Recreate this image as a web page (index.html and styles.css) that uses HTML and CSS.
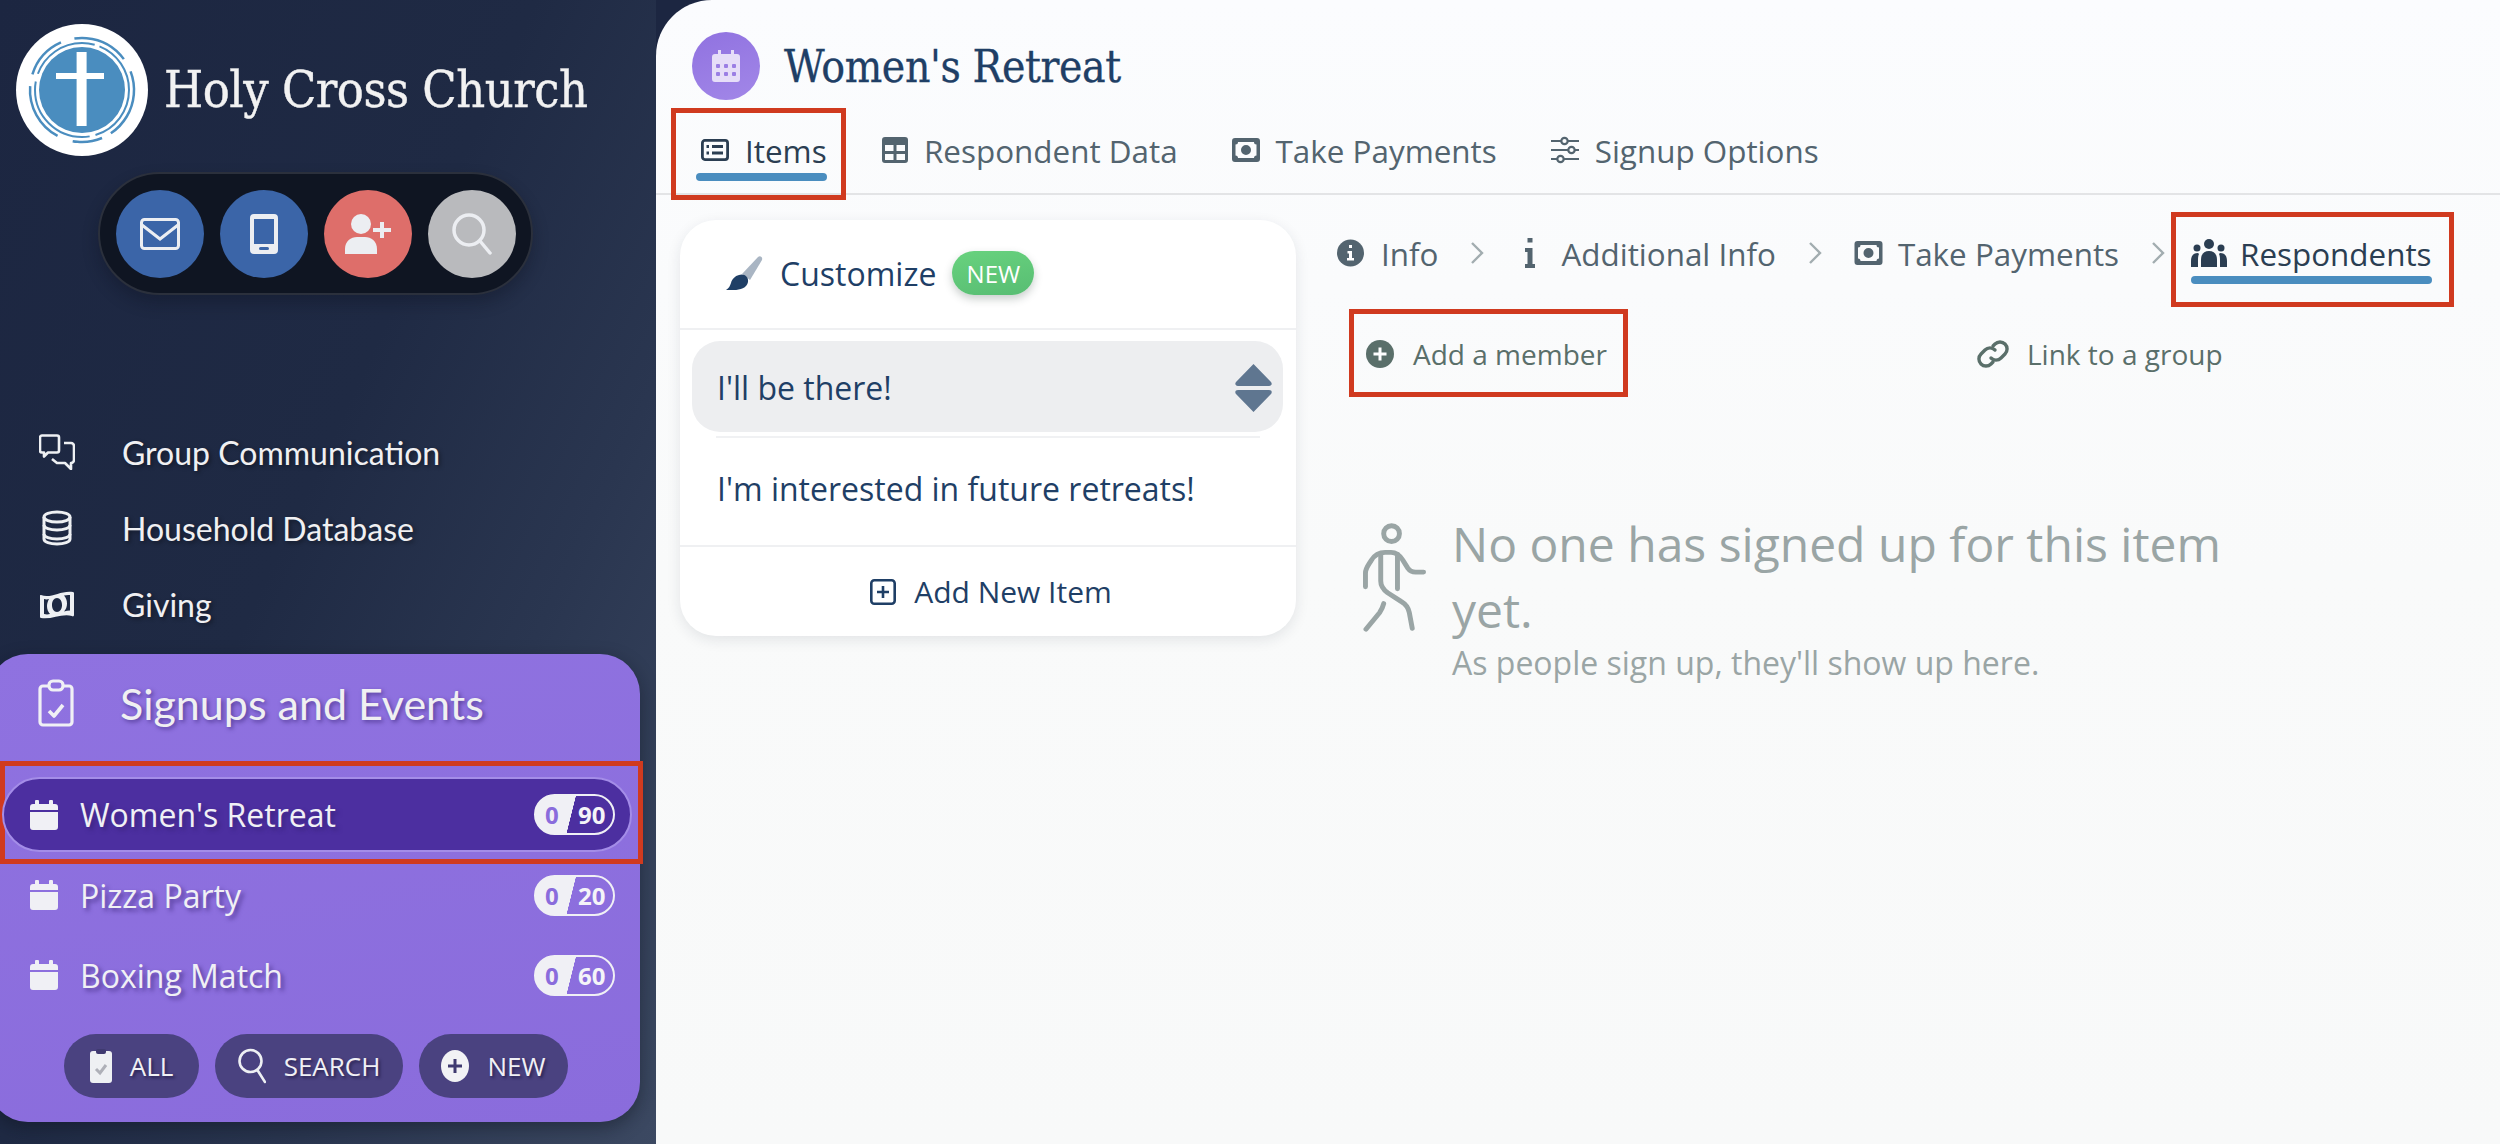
FILE: index.html
```html
<!DOCTYPE html>
<html lang="en">
<head>
    <meta charset="UTF-8">
    <title>Holy Cross Church - Women's Retreat</title>
    <link rel="stylesheet" href="styles.css">
</head>
<body>
<aside class="sidebar">
    <div class="brand">
        <svg class="logo" viewBox="0 0 132 132">
            <circle cx="66" cy="66" r="66" fill="#fff"/>
            <circle cx="66" cy="66" r="43" fill="#4a8dbf"/>
            <circle cx="66" cy="66" r="47" fill="none" stroke="#4a8dbf" stroke-width="2" stroke-dasharray="60 6 90 8 70 5"/>
            <circle cx="66" cy="66" r="52" fill="none" stroke="#4a8dbf" stroke-width="2.5" stroke-dasharray="44 14 70 10 30 16 60 12" transform="rotate(-85 66 66)"/>
            <rect x="60.6" y="28" width="10" height="74" fill="#fff"/>
            <rect x="40" y="49" width="48" height="6" fill="#fff"/>
        </svg>
        <h1 class="brand-name">Holy Cross Church</h1>
    </div>

    <div class="quick">
        <span class="quick-btn blue">
            <svg viewBox="0 0 40 32" width="40" height="32" fill="none" stroke="#eceef2" stroke-width="3"><rect x="1.5" y="1.5" width="37" height="29" rx="3"/><path d="M2 7l18 14L38 7"/></svg>
        </span>
        <span class="quick-btn blue">
            <svg viewBox="0 0 28 40" width="28" height="40"><path fill="#eceef2" fill-rule="evenodd" d="M4 0h20a4 4 0 0 1 4 4v32a4 4 0 0 1-4 4H4a4 4 0 0 1-4-4V4a4 4 0 0 1 4-4zm0 5v25h20V5z"/><rect x="9" y="33" width="10" height="3" rx="1.5" fill="#3b65a8"/></svg>
        </span>
        <span class="quick-btn red">
            <svg viewBox="0 0 46 40" width="46" height="40" fill="#eceef2"><circle cx="16" cy="10" r="10"/><path d="M0 40v-5c0-8 6-12 12-12h8c6 0 12 4 12 12v5z"/><path d="M35 8h4v6h7v4h-7v6h-4v-6h-7v-4h7z"/></svg>
        </span>
        <span class="quick-btn grey">
            <svg viewBox="0 0 40 42" width="40" height="42" fill="none" stroke="#eceef2" stroke-width="3.5" stroke-linecap="round"><circle cx="17" cy="17" r="15"/><path d="M28 28l10 12"/></svg>
        </span>
    </div>

    <nav class="nav">
        <a class="nav-row">
            <svg class="nav-icon" viewBox="0 0 36 36" fill="none" stroke="#eef0f3" stroke-width="2.6" stroke-linejoin="round"><path d="M3 1.5h15a2 2 0 0 1 2 2v13a2 2 0 0 1-2 2H9l-4 4v-4H3a2 2 0 0 1-2-2v-13a2 2 0 0 1 2-2z"/><path d="M25 9h7a3 3 0 0 1 3 3v14a3 3 0 0 1-3 3v6l-6-6h-8l-5-4"/></svg>
            <span>Group Communication</span>
        </a>
        <a class="nav-row">
            <svg class="nav-icon" viewBox="0 0 36 36" fill="none" stroke="#eef0f3" stroke-width="3"><ellipse cx="18" cy="7" rx="13" ry="5"/><path d="M5 7v22c0 3 6 5 13 5s13-2 13-5V7"/><path d="M5 15c0 3 6 5 13 5s13-2 13-5M5 24c0 3 6 5 13 5s13-2 13-5"/></svg>
            <span>Household Database</span>
        </a>
        <a class="nav-row">
            <svg class="nav-icon" viewBox="0 0 36 36"><path fill="#eef0f3" fill-rule="evenodd" d="M2 9c10 4 20-5 32-3 1 0 1 1 1 2v21c0 1-1 2-2 1-10-3-21 4-31 2-1 0-1-1-1-2V10c0-1 0-1 1-1zm3 4v15c2 .5 4 .5 6 0-2-2-3-5-3-8 0-3 1-5 2-7-2 .5-3 .5-5 0zm26-4c-2-.2-4 0-6 .4 2 2 3 5 3 8s-1 6-3 8c2-.5 4-.8 6-.8zM18 12c-3 0-5 3-5 7s2 7 5 7 5-3 5-7-2-7-5-7z"/></svg>
            <span>Giving</span>
        </a>
    </nav>

    <section class="signups">
        <div class="signups-head">
            <svg class="signups-icon" viewBox="0 0 36 48" fill="none" stroke="#f0f0f5" stroke-width="3.2" stroke-linejoin="round"><path d="M11 7H5a3 3 0 0 0-3 3v33a3 3 0 0 0 3 3h26a3 3 0 0 0 3-3V10a3 3 0 0 0-3-3h-6"/><rect x="11" y="2" width="14" height="9" rx="4"/><path d="M11 32l5 5 9-11" stroke-width="3.6"/></svg>
            <span>Signups and Events</span>
        </div>

        <div class="current-mark">
            <a class="event selected">
                <svg class="cal" viewBox="0 0 28 30"><use href="#cal-shape"/></svg>
                <span class="event-name">Women's Retreat</span>
                <span class="count"><b class="count-in">0</b><b class="count-max">90</b></span>
            </a>
        </div>

        <div class="event-list">
            <a class="event">
                <svg class="cal" viewBox="0 0 28 30"><use href="#cal-shape"/></svg>
                <span class="event-name">Pizza Party</span>
                <span class="count"><b class="count-in">0</b><b class="count-max">20</b></span>
            </a>
            <a class="event">
                <svg class="cal" viewBox="0 0 28 30"><use href="#cal-shape"/></svg>
                <span class="event-name">Boxing Match</span>
                <span class="count"><b class="count-in">0</b><b class="count-max">60</b></span>
            </a>
        </div>

        <div class="signup-btns">
            <a class="pill-btn all">
                <svg viewBox="0 0 22 34" width="22" height="34"><rect y="2" width="22" height="32" rx="3" fill="#eef0f3"/><rect x="6" width="10" height="5" rx="2" fill="#3f3a70"/><path d="M6 20l4 4 6-8" fill="none" stroke="#aeb0b8" stroke-width="3"/></svg>
                ALL
            </a>
            <a class="pill-btn search">
                <svg viewBox="0 0 28 36" width="28" height="36" fill="none" stroke="#eef0f3" stroke-width="2.6" stroke-linecap="round"><circle cx="12.5" cy="13" r="11"/><path d="M20 23l7 11"/></svg>
                SEARCH
            </a>
            <a class="pill-btn new">
                <svg viewBox="0 0 28 32" width="28" height="32"><ellipse cx="14" cy="16" rx="14" ry="16" fill="#f2f2f5"/><path d="M12.5 9h3v5.5H21v3h-5.5V23h-3v-5.5H7v-3h5.5z" fill="#3f3a70"/></svg>
                NEW
            </a>
        </div>
    </section>
</aside>

<main class="main">
    <header class="page-head">
        <span class="page-badge">
            <svg viewBox="0 0 28 32" width="28" height="32"><path fill="#e6def8" d="M6 0h3v4h10V0h3v4h3a3 3 0 0 1 3 3v22a3 3 0 0 1-3 3H3a3 3 0 0 1-3-3V7a3 3 0 0 1 3-3h3z"/><g fill="#9b7fe4"><rect x="4" y="14" width="4" height="4" rx="1"/><rect x="12" y="14" width="4" height="4" rx="1"/><rect x="20" y="14" width="4" height="4" rx="1"/><rect x="4" y="22" width="4" height="4" rx="1"/><rect x="12" y="22" width="4" height="4" rx="1"/><rect x="20" y="22" width="4" height="4" rx="1"/></g></svg>
        </span>
        <h2 class="page-title">Women's Retreat</h2>
    </header>

    <div class="tabs">
        <div class="mark tab-mark">
            <a class="tab active">
                <svg viewBox="0 0 28 22" width="28" height="22" fill="none" stroke="#2b3e52" stroke-width="2.8"><rect x="1.4" y="1.4" width="25.2" height="19.2" rx="2.5"/><path d="M5.5 7.5h2.5M11 7.5h11M5.5 14h2.5M11 14h11"/></svg>
                Items
            </a>
            <div class="underline"></div>
        </div>
        <a class="tab">
            <svg viewBox="0 0 26 26" width="26" height="26"><path fill="#53646f" fill-rule="evenodd" d="M3 0h20a3 3 0 0 1 3 3v20a3 3 0 0 1-3 3H3a3 3 0 0 1-3-3V3a3 3 0 0 1 3-3zm0 8v6h8.5V8zm11.5 0v6H23V8zM3 17v6h8.5v-6zm11.5 0v6H23v-6z"/></svg>
            Respondent Data
        </a>
        <a class="tab">
            <svg viewBox="0 0 28 24" width="28" height="24"><use href="#bill-shape"/></svg>
            Take Payments
        </a>
        <a class="tab">
            <svg viewBox="0 0 28 28" width="28" height="28" fill="none" stroke="#53646f" stroke-width="2.2"><path d="M0 5h10M17 5h11M0 14h17M24 14h4M0 23h6M13 23h15"/><circle cx="13.5" cy="5" r="3.2"/><circle cx="20.5" cy="14" r="3.2"/><circle cx="9.5" cy="23" r="3.2"/></svg>
            Signup Options
        </a>
    </div>

    <div class="content">
        <section class="card">
            <div class="card-head">
                <svg viewBox="0 0 38 34" width="38" height="34"><path d="M17 18L33 1c2-2 5 0 4 3L25 24z" fill="#a9b5c3"/><path d="M14 19c5-2 10 2 9 7-1 6-8 8-14 8H1c3-2 4-4 5-7 1-4 4-7 8-8z" fill="#1f3f66"/></svg>
                <span>Customize</span>
                <span class="new-tag">NEW</span>
            </div>
            <div class="card-items">
                <div class="card-item current">
                    <span>I'll be there!</span>
                    <svg class="sorter" viewBox="0 0 37 48" width="37" height="48"><path fill="#5f7690" d="M18.5 0L36 18c1.5 2 .5 4-2 4H3c-2.5 0-3.5-2-2-4zM18.5 48L36 30c1.5-2 .5-4-2-4H3c-2.5 0-3.5 2-2 4z"/></svg>
                </div>
                <div class="item-rule"></div>
                <div class="card-item">I'm interested in future retreats!</div>
            </div>
            <a class="card-foot">
                <svg viewBox="0 0 26 26" width="26" height="26" fill="none" stroke="#1f3f66" stroke-width="2.6"><rect x="1.3" y="1.3" width="23.4" height="23.4" rx="3"/><path d="M13 7v12M7 13h12"/></svg>
                Add New Item
            </a>
        </section>

        <section class="detail">
            <div class="steps">
                <a class="step">
                    <svg viewBox="0 0 27 28" width="27" height="28"><circle cx="13.5" cy="14" r="13.5" fill="#53646f"/><path fill="#fff" d="M12 6h3v3h-3zM10.5 12H15v7h2v2.5h-7V19h2v-4.5h-1.5z"/></svg>
                    Info
                </a>
                <svg class="chev" viewBox="0 0 14 24" width="14" height="24" fill="none" stroke="#a2adb0" stroke-width="2.4"><path d="M2 2l10 10L2 22"/></svg>
                <a class="step">
                    <svg viewBox="0 0 28 30" width="28" height="30"><path fill="#53646f" d="M11.5 0h5v4.5h-5zM9 10h7.5v16H19v4H9v-4h2.5V14H9z"/></svg>
                    Additional Info
                </a>
                <svg class="chev" viewBox="0 0 14 24" width="14" height="24" fill="none" stroke="#a2adb0" stroke-width="2.4"><path d="M2 2l10 10L2 22"/></svg>
                <a class="step step-tight">
                    <svg viewBox="0 0 28 24" width="29" height="24"><use href="#bill-shape"/></svg>
                    Take Payments
                </a>
                <svg class="chev chev-last" viewBox="0 0 14 24" width="14" height="24" fill="none" stroke="#a2adb0" stroke-width="2.4"><path d="M2 2l10 10L2 22"/></svg>
                <div class="mark step-mark">
                    <a class="step step-on">
                        <svg viewBox="0 0 36 28" width="36" height="28" fill="#2b3e52"><circle cx="18" cy="5" r="5"/><circle cx="6" cy="9" r="3.5"/><circle cx="30" cy="9" r="3.5"/><path d="M10 28v-7c0-6 3-9 8-9s8 3 8 9v7z"/><path d="M0 28v-6c0-5 2-8 7-8l1 1c-1 2-1 4-1 7v6zM36 28v-6c0-5-2-8-7-8l-1 1c1 2 1 4 1 7v6z"/></svg>
                        Respondents
                    </a>
                    <div class="underline"></div>
                </div>
            </div>

            <div class="actions">
                <div class="mark add-mark">
                    <a class="action">
                        <svg viewBox="0 0 28 28" width="28" height="28"><circle cx="14" cy="14" r="14" fill="#5a6f6a"/><path fill="#fff" d="M12.5 7.5h3v5h5v3h-5v5h-3v-5h-5v-3h5z"/></svg>
                        Add a member
                    </a>
                </div>
                <a class="action link-group">
                    <svg viewBox="0 0 32 30" width="32" height="30" fill="none" stroke="#5a6f6a" stroke-width="3.4" stroke-linecap="round"><path d="M14 19a7 7 0 0 0 10 0l4-4a7 7 0 0 0-10-10l-2 2"/><path d="M18 11a7 7 0 0 0-10 0l-4 4a7 7 0 0 0 10 10l2-2"/></svg>
                    Link to a group
                </a>
            </div>

            <div class="empty">
                <svg class="walker" viewBox="0 0 66 110" fill="none" stroke="#9aa5a5" stroke-width="5" stroke-linecap="round" stroke-linejoin="round">
                    <circle cx="29" cy="10" r="8"/>
                    <path d="M2.5 64V50c0-5 3-8 6-13 3-5 8-8 14-8h6c5 0 9 3 12 8l5 8c2 3 4 4 8 4h8"/>
                    <path d="M18 31v27c0 6 3 9 7 12l14 9c5 3 7 6 8 11l3 16"/>
                    <path d="M35 31v35"/>
                    <path d="M21 81c-1 4-2 6-4 9L3 107"/>
                </svg>
                <div class="empty-text">
                    <p class="empty-title">No one has signed up for this item yet.</p>
                    <p class="empty-sub">As people sign up, they'll show up here.</p>
                </div>
            </div>
        </section>
    </div>
</main>

<svg class="defs" width="0" height="0">
    <defs>
        <path id="cal-shape" fill="#f0f0f5" d="M5 1.5a2 2 0 0 1 4 0V4h10V1.5a2 2 0 0 1 4 0V4h2a3 3 0 0 1 3 3v3H0V7a3 3 0 0 1 3-3h2zM0 12h28v15a3 3 0 0 1-3 3H3a3 3 0 0 1-3-3z"/>
        <path id="bill-shape" fill="#53646f" fill-rule="evenodd" d="M3 0h22a3 3 0 0 1 3 3v18a3 3 0 0 1-3 3H3a3 3 0 0 1-3-3V3a3 3 0 0 1 3-3zm3 4a2.5 2.5 0 0 1-2.5 2.5v11A2.5 2.5 0 0 1 6 20h16a2.5 2.5 0 0 1 2.5-2.5v-11A2.5 2.5 0 0 1 22 4zm8 3a5 5 0 1 1 0 10 5 5 0 0 1 0-10z"/>
    </defs>
</svg>
</body>
</html>
```

FILE: styles.css
```css
* {
  box-sizing: border-box;
}
body {
  margin: 0;
  width: 2500px;
  height: 1144px;
  overflow: hidden;
  display: flex;
  font-family: "Open Sans", "Noto Sans", sans-serif;
  background: #1c2641;
}
a {
  color: inherit;
  text-decoration: none;
}
h1, h2, p {
  margin: 0;
  font-weight: normal;
}
.defs {
  display: block;
  flex: none;
}

/* sidebar */
.sidebar {
  width: 656px;
  flex: none;
  color: #f0f0f2;
  background: linear-gradient(115deg, #1c2641 0%, #1f2a44 45%, #2a3650 70%, #3c4962 100%);
}
.brand {
  display: flex;
  align-items: center;
  padding: 24px 0 0 16px;
}
.logo {
  width: 132px;
  height: 132px;
  flex: none;
}
.brand-name {
  margin-left: 16px;
  font-family: "DejaVu Serif", "Liberation Serif", serif;
  font-stretch: condensed;
  font-size: 50px;
  letter-spacing: -.5px;
  -webkit-text-stroke: .4px #f2f2f2;
  color: #f2f2f2;
  white-space: nowrap;
}
.quick {
  display: flex;
  align-items: center;
  gap: 16px;
  width: 435px;
  height: 123px;
  margin: 16px 0 0 98px;
  padding-left: 16px;
  background: #0f1522;
  border: 2px solid #2b303c;
  border-radius: 62px;
  box-shadow: 0 8px 16px rgba(10, 14, 25, .3);
}
.quick-btn {
  display: flex;
  align-items: center;
  justify-content: center;
  width: 88px;
  height: 88px;
  border-radius: 50%;
}
.quick-btn.blue {
  background: #3b65a8;
}
.quick-btn.red {
  background: #de6e6a;
}
.quick-btn.grey {
  background: #b9babd;
}
.nav {
  margin-top: 119px;
}
.nav-row {
  display: flex;
  align-items: center;
  gap: 47px;
  height: 76px;
  padding-left: 39px;
  font-family: "Lato", sans-serif;
  font-size: 32px;
  text-shadow: 2px 2px 4px rgba(0, 0, 0, .4);
}
.nav-icon {
  width: 36px;
  height: 36px;
  flex: none;
}

/* purple panel */
.signups {
  width: 652px;
  height: 468px;
  margin: 12px 0 0 -12px;
  background: linear-gradient(170deg, #8f72e0, #8a6cdc);
  border-radius: 40px;
  box-shadow: 0 6px 18px rgba(10, 14, 25, .4);
}
.signups-head {
  display: flex;
  align-items: center;
  gap: 46px;
  height: 98px;
  margin-bottom: 9px;
  padding-left: 50px;
  font-family: "Lato", sans-serif;
  font-size: 43px;
  text-shadow: 2px 2px 4px rgba(50, 30, 110, .6);
}
.signups-icon {
  width: 36px;
  height: 48px;
  flex: none;
}
.current-mark {
  width: 643px;
  margin-left: 12px;
  padding: 11px 6px 7px 0;
  border: 5px solid #d03a1f;
  position: relative;
}
.event {
  display: flex;
  align-items: center;
  height: 62px;
  padding: 0 25px 0 42px;
  font-size: 32px;
  color: #f0f0f5;
  text-shadow: 3px 3px 4px rgba(50, 30, 110, .6);
}
.event.selected {
  height: 75px;
  margin-left: -3px;
  padding: 0 15px 0 26px;
  background: #4c2fa0;
  border: 2px solid #a48de8;
  border-radius: 38px;
}
.event-list {
  display: flex;
  flex-direction: column;
  gap: 18px;
}
.cal {
  width: 28px;
  height: 30px;
  flex: none;
  margin-right: 22px;
}
.event-name {
  flex: 1;
}
.count {
  display: flex;
  align-items: center;
  width: 81px;
  height: 41px;
  border: 2px solid #f0f0f5;
  border-radius: 21px;
  background: linear-gradient(104deg, #f0f0f5 46%, transparent 46.5%);
  font-size: 24px;
  text-shadow: none;
}
.count-in {
  width: 34px;
  padding-left: 9px;
  color: #8a6cdc;
}
.count-max {
  padding-left: 8px;
  color: #f4f4f8;
}
.signup-btns {
  display: flex;
  gap: 16px;
  margin-top: 28px;
  padding-left: 76px;
}
.pill-btn {
  display: flex;
  align-items: center;
  justify-content: center;
  gap: 18px;
  height: 64px;
  background: #4a4280;
  border-radius: 32px;
  font-size: 26px;
  color: #f0f0f5;
  text-shadow: 2px 2px 3px rgba(20, 15, 50, .6);
}
.pill-btn.all {
  width: 135px;
}
.pill-btn.search {
  width: 188px;
}
.pill-btn.new {
  width: 149px;
}

/* main area */
.main {
  flex: 1;
  height: 1144px;
  background: linear-gradient(180deg, #fbfcfe 0%, #f9fafa 50%, #f8f9f9 100%);
  border-top-left-radius: 56px;
}
.page-head {
  display: flex;
  align-items: center;
  gap: 24px;
  height: 68px;
  margin-top: 32px;
  padding-left: 36px;
}
.page-badge {
  display: flex;
  align-items: center;
  justify-content: center;
  width: 68px;
  height: 68px;
  border-radius: 50%;
  background: linear-gradient(160deg, #9072e0, #a287e8);
}
.page-title {
  font-family: "DejaVu Serif", "Liberation Serif", serif;
  font-stretch: condensed;
  font-size: 44px;
  letter-spacing: -.4px;
  -webkit-text-stroke: .3px #1f3f66;
  color: #1f3f66;
}
.tabs {
  display: flex;
  align-items: flex-start;
  gap: 36px;
  height: 87px;
  margin-top: 8px;
  padding-left: 15px;
  border-bottom: 2px solid #e3e4e6;
}
.tab {
  display: flex;
  align-items: center;
  gap: 16px;
  height: 42px;
  margin-top: 21px;
  margin-right: 18px;
  font-size: 31.4px;
  color: #53646f;
  white-space: nowrap;
}
.mark {
  border: 5px solid #d03a1f;
  position: relative;
}
.underline {
  height: 8px;
  background: #4a8dbf;
  border-radius: 4px;
}
.tab-mark {
  width: 175px;
  height: 92px;
  padding: 16px 14px 0 20px;
}
.tab-mark .underline {
  margin-top: 2px;
}
.tab.active {
  margin: 0;
  padding-left: 5px;
  color: #2b3e52;
}

.content {
  display: flex;
  align-items: flex-start;
}
.card {
  width: 616px;
  height: 416px;
  margin: 25px 0 0 24px;
  background: #fff;
  border-radius: 36px;
  box-shadow: 0 4px 14px rgba(30, 40, 60, .1);
  color: #1f3f66;
  font-size: 32px;
}
.card-head {
  display: flex;
  align-items: center;
  height: 110px;
  padding: 0 0 2px 45px;
  border-bottom: 2px solid #eff0f2;
}
.card-head span:first-of-type {
  margin-left: 17px;
}
.new-tag {
  display: flex;
  align-items: center;
  justify-content: center;
  width: 82px;
  height: 44px;
  margin-left: 16px;
  background: linear-gradient(170deg, #68d27e, #58bd73);
  border-radius: 22px;
  box-shadow: 0 4px 8px rgba(40, 60, 50, .25);
  color: #fff;
  font-size: 24px;
}
.card-items {
  padding: 11px 13px 0 12px;
  height: 217px;
  border-bottom: 2px solid #eff0f2;
}
.card-item {
  display: flex;
  align-items: center;
  height: 107px;
  padding: 0 25px 6px;
}
.card-item.current {
  height: 91px;
  padding: 2px 11px 0 25px;
  justify-content: space-between;
  background: #edeef0;
  border-radius: 28px;
}
.item-rule {
  height: 2px;
  margin: 4px 23px 0 24px;
  background: #f0f1f3;
}
.card-foot {
  display: flex;
  align-items: center;
  justify-content: center;
  gap: 18px;
  height: 87px;
  padding: 2px 0 0 6px;
  font-size: 30px;
}

.detail {
  margin-left: 41px;
  flex: none;
}
.steps {
  display: flex;
  align-items: flex-start;
  height: 95px;
  margin-top: 17px;
}
.step {
  display: flex;
  align-items: center;
  gap: 17px;
  height: 42px;
  margin-top: 20px;
  font-size: 31.4px;
  color: #53646f;
  white-space: nowrap;
}
.step-tight {
  gap: 15px;
}
.chev {
  flex: none;
  margin: 29px 32px 0;
}
.chev-last {
  margin-right: 6px;
}
.step-mark {
  width: 283px;
  height: 95px;
  padding: 15px 17px 0 15px;
}
.step-on {
  gap: 13px;
  height: 42px;
  margin: 0 0 2px;
  color: #2b3e52;
}
.actions {
  display: flex;
  align-items: flex-start;
  margin: 2px 0 0 12px;
}
.add-mark {
  width: 279px;
  height: 88px;
  padding: 20px 0 0 12px;
}
.action {
  display: flex;
  align-items: center;
  gap: 19px;
  height: 40px;
  font-size: 28px;
  color: #5a6f6a;
  white-space: nowrap;
}
.link-group {
  gap: 18px;
  margin: 25px 0 0 349px;
}
.empty {
  display: flex;
  align-items: flex-start;
  gap: 24px;
  margin: 114px 0 0 26px;
  color: #9aa5a5;
}
.walker {
  width: 65px;
  height: 110px;
  flex: none;
  margin-top: 12px;
}
.empty-text {
  width: 790px;
}
.empty-title {
  font-size: 48px;
  line-height: 66px;
}
.empty-sub {
  font-size: 32px;
  line-height: 40px;
}
```
